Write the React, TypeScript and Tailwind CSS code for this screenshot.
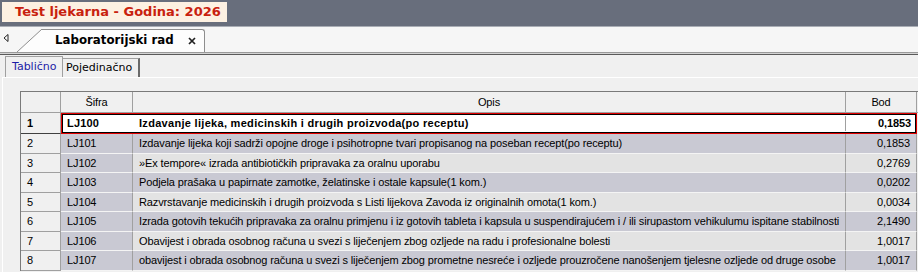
import React from 'react';

type Row = { n: number; code: string; desc: string; bod: string };

const rows: Row[] = [
    { n: 1, code: 'LJ100', desc: 'Izdavanje lijeka, medicinskih i drugih proizvoda(po receptu)', bod: '0,1853' },
    { n: 2, code: 'LJ101', desc: 'Izdavanje lijeka koji sadrži opojne droge i psihotropne tvari propisanog na poseban recept(po receptu)', bod: '0,1853' },
    { n: 3, code: 'LJ102', desc: '»Ex tempore« izrada antibiotičkih pripravaka za oralnu uporabu', bod: '0,2769' },
    { n: 4, code: 'LJ103', desc: 'Podjela prašaka u papirnate zamotke, želatinske i ostale kapsule(1 kom.)', bod: '0,0202' },
    { n: 5, code: 'LJ104', desc: 'Razvrstavanje medicinskih i drugih proizvoda s Listi lijekova Zavoda iz originalnih omota(1 kom.)', bod: '0,0034' },
    { n: 6, code: 'LJ105', desc: 'Izrada gotovih tekućih pripravaka za oralnu primjenu i iz gotovih tableta i kapsula u suspendirajućem i / ili sirupastom vehikulumu ispitane stabilnosti', bod: '2,1490' },
    { n: 7, code: 'LJ106', desc: 'Obavijest i obrada osobnog računa u svezi s liječenjem zbog ozljede na radu i profesionalne bolesti', bod: '1,0017' },
    { n: 8, code: 'LJ107', desc: 'obavijest i obrada osobnog računa u svezi s liječenjem zbog prometne nesreće i ozljede prouzročene nanošenjem tjelesne ozljede od druge osobe', bod: '1,0017' },
];

const TabArrow = () => (
    <svg width="6" height="8" viewBox="0 0 6 8" className="ml-[3px] mb-[10px]">
        <path d="M5 0.5 L1 4 L5 7.5 Z" fill="#fff" stroke="#222" strokeWidth="1" />
    </svg>
);

const CloseX = () => (
    <svg width="8" height="8" viewBox="0 0 8 8">
        <path d="M1 1 L7 7 M7 1 L1 7" stroke="#222" strokeWidth="1.7" />
    </svg>
);

export default function App() {
    return (
        <div className="w-[918px] h-[272px] overflow-hidden bg-[#f0f0f0]" style={{ fontFamily: '"DejaVu Sans", sans-serif' }}>

            {/* title bar */}
            <div className="h-[27px] bg-[#686e7c] border-b border-[#a9adb5] pt-[2px] pl-[2px]">
                <div className="w-[225px] h-[20px] bg-[#fdf1e2] flex items-center pl-[13px] text-[13px] font-bold text-[#c8210e]">
                    Test ljekarna - Godina: 2026
                </div>
            </div>

            {/* document tabs */}
            <div className="h-[25px] bg-[#f6f6f6] flex items-end">
                <div className="w-[17px] h-[23px] flex items-end">
                    <TabArrow />
                </div>
                <svg width="25" height="23" viewBox="0 0 25 23" className="block">
                    <polygon points="0,23 25,0 25,23" fill="#fdfdfd" />
                    <line x1="0" y1="23" x2="25" y2="0" stroke="#8e8e8e" strokeWidth="1" />
                </svg>
                <div className="w-[163px] h-[23px] bg-[#fdfdfd] border-t border-r border-[#8e8e8e] rounded-tr-[3px] flex items-center pl-[13px] pr-[8px]">
                    <span className="text-[11.8px] font-bold text-black">Laboratorijski rad</span>
                    <span className="ml-auto flex"><CloseX /></span>
                </div>
            </div>
            <div className="h-[1px] bg-[#9a9a9a]" />
            <div className="h-[1px] bg-[#d4d4d4]" />
            <div className="h-[1px] bg-[#5a5a5a]" />

            {/* view tabs */}
            <div className="h-[22px] flex items-end pl-[5px] pt-[1px] text-[11px]">
                <div className="h-[21px] w-[58px] border-t border-l border-r border-[#a0a0a0] bg-[#f0f0f0] flex items-center pl-[6px] text-[#1c1ca6]">
                    Tablično
                </div>
                <div className="h-[19px] w-[77px] border-t border-r-2 border-[#a0a0a0] border-r-[#6a6a6a] bg-[#f0f0f0] flex items-center pl-[3px] text-black">
                    Pojedinačno
                </div>
            </div>

            {/* panel */}
            <div className="border-t border-white ml-[2px] border-l h-[200px] pt-[13px] pl-[17px]">
                <div
                    className="border-l border-t border-[#7a7a7a] text-[11px] tracking-[-0.12px] text-black"
                    style={{ fontFamily: '"Liberation Sans", Arial, sans-serif' }}
                >
                    {/* header */}
                    <div className="flex h-[21px] bg-[#f0f0f0] border-b border-[#a0a0a0]">
                        <div className="w-[40px] border-r border-[#a0a0a0]" />
                        <div className="w-[72px] border-r border-[#a0a0a0] flex items-center justify-center">Šifra</div>
                        <div className="w-[713px] border-r border-[#a0a0a0] flex items-center justify-center">Opis</div>
                        <div className="w-[71px] border-r border-[#a0a0a0] flex items-center justify-center">Bod</div>
                    </div>

                    {rows.map((r) => {
                        const sel = r.n === 1;
                        const even = r.n % 2 === 0;
                        const cellBg = even ? 'bg-[#c9c9d3]' : 'bg-[#e3e3e3]';
                        return (
                            <div key={r.n} className={`flex ${sel ? 'h-[21px]' : 'h-[19.5px]'}`}>
                                <div className={`w-[40px] shrink-0 bg-[#f0f0f0] border-r border-[#a0a0a0] flex items-center pl-[6px] ${sel ? 'font-bold border-b border-b-[#404040]' : 'border-b border-[#a0a0a0]'}`}>
                                    {r.n}
                                </div>
                                {sel ? (
                                    <div className="flex bg-white font-bold shadow-[inset_0_0_0_1px_#e00000,inset_0_0_0_2px_#000000]">
                                        <div className="w-[72px] flex items-center pl-[6px] tracking-[0.2px]">{r.code}</div>
                                        <div className="w-[713px] flex items-center pl-[6px] border-r border-[#a0a0a0] my-[3px] tracking-[0.3px]">{r.desc}</div>
                                        <div className="w-[71px] flex items-center justify-end pr-[6px]">{r.bod}</div>
                                    </div>
                                ) : (
                                    <>
                                        <div className="w-[72px] shrink-0 bg-[#c9c9d3] border-r border-b border-r-[#a0a0a0] border-b-[#f4f4f4] flex items-center pl-[6px]">{r.code}</div>
                                        <div className={`w-[713px] shrink-0 ${cellBg} border-r border-b border-r-[#a0a0a0] border-b-[#f4f4f4] flex items-center pl-[6px] whitespace-nowrap overflow-hidden`}>{r.desc}</div>
                                        <div className={`w-[71px] shrink-0 ${cellBg} border-r border-b border-r-[#a0a0a0] border-b-[#f4f4f4] flex items-center justify-end pr-[6px]`}>{r.bod}</div>
                                    </>
                                )}
                            </div>
                        );
                    })}
                </div>
            </div>
        </div>
    );
}
